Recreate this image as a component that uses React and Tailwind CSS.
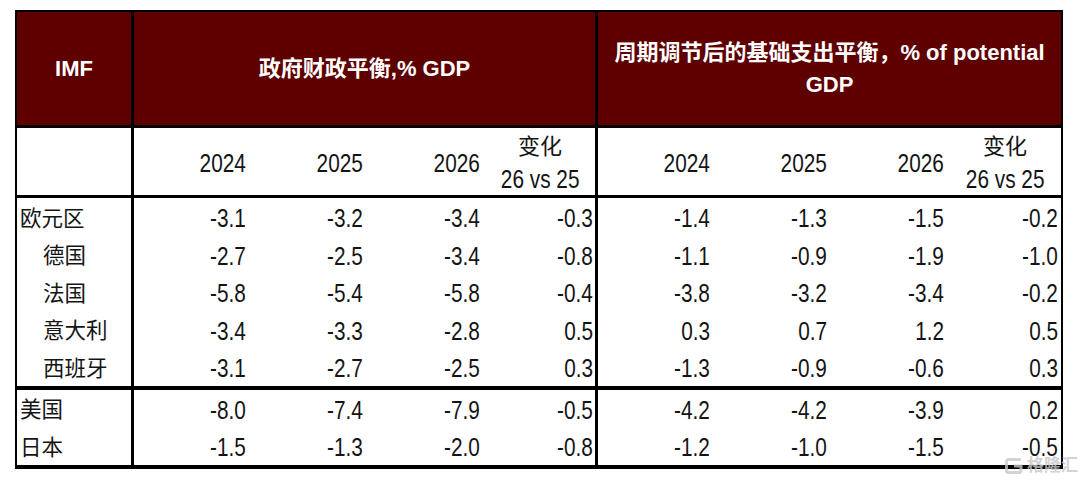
import React from 'react';

const latin = "font-['Liberation_Sans','Noto_Sans_CJK_SC',sans-serif]";
const cjk = "font-['Liberation_Sans','Noto_Sans_CJK_SC',sans-serif]";

const euro = [
  ['欧元区', false, ['-3.1', '-3.2', '-3.4', '-0.3'], ['-1.4', '-1.3', '-1.5', '-0.2']],
  ['德国', true, ['-2.7', '-2.5', '-3.4', '-0.8'], ['-1.1', '-0.9', '-1.9', '-1.0']],
  ['法国', true, ['-5.8', '-5.4', '-5.8', '-0.4'], ['-3.8', '-3.2', '-3.4', '-0.2']],
  ['意大利', true, ['-3.4', '-3.3', '-2.8', '0.5'], ['0.3', '0.7', '1.2', '0.5']],
  ['西班牙', true, ['-3.1', '-2.7', '-2.5', '0.3'], ['-1.3', '-0.9', '-0.6', '0.3']],
];

const others = [
  ['美国', false, ['-8.0', '-7.4', '-7.9', '-0.5'], ['-4.2', '-4.2', '-3.9', '0.2']],
  ['日本', false, ['-1.5', '-1.3', '-2.0', '-0.8'], ['-1.2', '-1.0', '-1.5', '-0.5']],
];

// numbers in the sheet are set in a narrow face, squeeze them horizontally
const Num = ({ children, className = '' }) => (
  <div className={`flex items-center justify-end text-[26px] text-[#141414] ${latin} ${className}`}>
    <span className="inline-block scale-x-[0.8] origin-right whitespace-nowrap">{children}</span>
  </div>
);

const Row = ({ row }) => {
  const [label, indent, a, b] = row;
  return (
    <div className="flex h-[37.5px] pt-[4px]">
      <div className={`w-[117px] -mt-[4px] pt-[4px] border-r-[3px] border-black flex items-center text-[21.5px] text-[#141414] ${cjk} ${indent ? 'pl-[26px]' : 'pl-[3px]'}`}>
        {label}
      </div>
      <Num className="w-[117px] pr-[5px]">{a[0]}</Num>
      <Num className="w-[117px] pr-[5px]">{a[1]}</Num>
      <Num className="w-[117px] pr-[5px]">{a[2]}</Num>
      <Num className="w-[113px] -mt-[4px] pt-[4px] pr-[2px] border-r-[3px] border-black">{a[3]}</Num>
      <Num className="w-[117px] pr-[5px]">{b[0]}</Num>
      <Num className="w-[117px] pr-[5px]">{b[1]}</Num>
      <Num className="w-[117px] pr-[5px]">{b[2]}</Num>
      <Num className="w-[112px] pr-[3px]">{b[3]}</Num>
    </div>
  );
};

const ChangeHead = ({ className = '' }) => (
  <div className={`flex flex-col items-center justify-center pt-[2px] text-[#141414] ${className}`}>
    <span className={`text-[22px] leading-[32px] ${cjk}`}>变化</span>
    <span className={`inline-block scale-x-[0.8] whitespace-nowrap text-[26px] leading-[32px] ${latin}`}>26 vs 25</span>
  </div>
);

export default function App() {
  return (
    <div className="relative w-[1080px] h-[481px] bg-white overflow-hidden">
      <div className="ml-[15px] pt-[10px]">
        <div className="w-[1048px] border-t-2 border-l-2 border-r-2 border-b-4 border-black">
          {/* header */}
          <div className={`flex h-[116px] bg-[#5e0000] border-b-[3px] border-black text-white font-bold ${cjk}`}>
            <div className="w-[117px] border-r-[3px] border-black flex items-center justify-center text-[22px]">IMF</div>
            <div className="w-[464px] border-r-[3px] border-black flex items-center justify-center text-[22px]">
              政府财政平衡,% GDP
            </div>
            <div className="w-[463px] flex items-center justify-center text-center text-[22px] leading-[32px]">
              <span>
                周期调节后的基础支出平衡，% of potential
                <br />
                GDP
              </span>
            </div>
          </div>
          {/* years */}
          <div className="flex h-[70px] border-b-[3px] border-black">
            <div className="w-[117px] border-r-[3px] border-black" />
            <Num className="w-[117px] pt-[3px] pr-[5px]">2024</Num>
            <Num className="w-[117px] pt-[3px] pr-[5px]">2025</Num>
            <Num className="w-[117px] pt-[3px] pr-[5px]">2026</Num>
            <ChangeHead className="w-[113px] border-r-[3px] border-black" />
            <Num className="w-[117px] pt-[3px] pr-[5px]">2024</Num>
            <Num className="w-[117px] pt-[3px] pr-[5px]">2025</Num>
            <Num className="w-[117px] pt-[3px] pr-[5px]">2026</Num>
            <ChangeHead className="w-[112px]" />
          </div>
          <div className="border-b-4 border-black">
            {euro.map((r) => (
              <Row key={r[0]} row={r} />
            ))}
          </div>
          <div>
            {others.map((r) => (
              <Row key={r[0]} row={r} />
            ))}
          </div>
        </div>
      </div>
      {/* watermark */}
      <div className={`absolute left-[1004px] top-[456px] h-[20px] flex items-center gap-[3px] opacity-80 ${cjk}`}>
        <svg width="20" height="18" viewBox="0 0 20 18" fill="none">
          <path d="M17 2.5H4.5a2 2 0 0 0-2 2v9a2 2 0 0 0 2 2H17" stroke="#c9c9c9" strokeWidth="3" />
          <path d="M10 9h7v6.5" stroke="#c9c9c9" strokeWidth="3" />
        </svg>
        <span className="text-[17px] font-bold leading-[20px] text-[#c9c9c9]">格隆汇</span>
      </div>
    </div>
  );
}
